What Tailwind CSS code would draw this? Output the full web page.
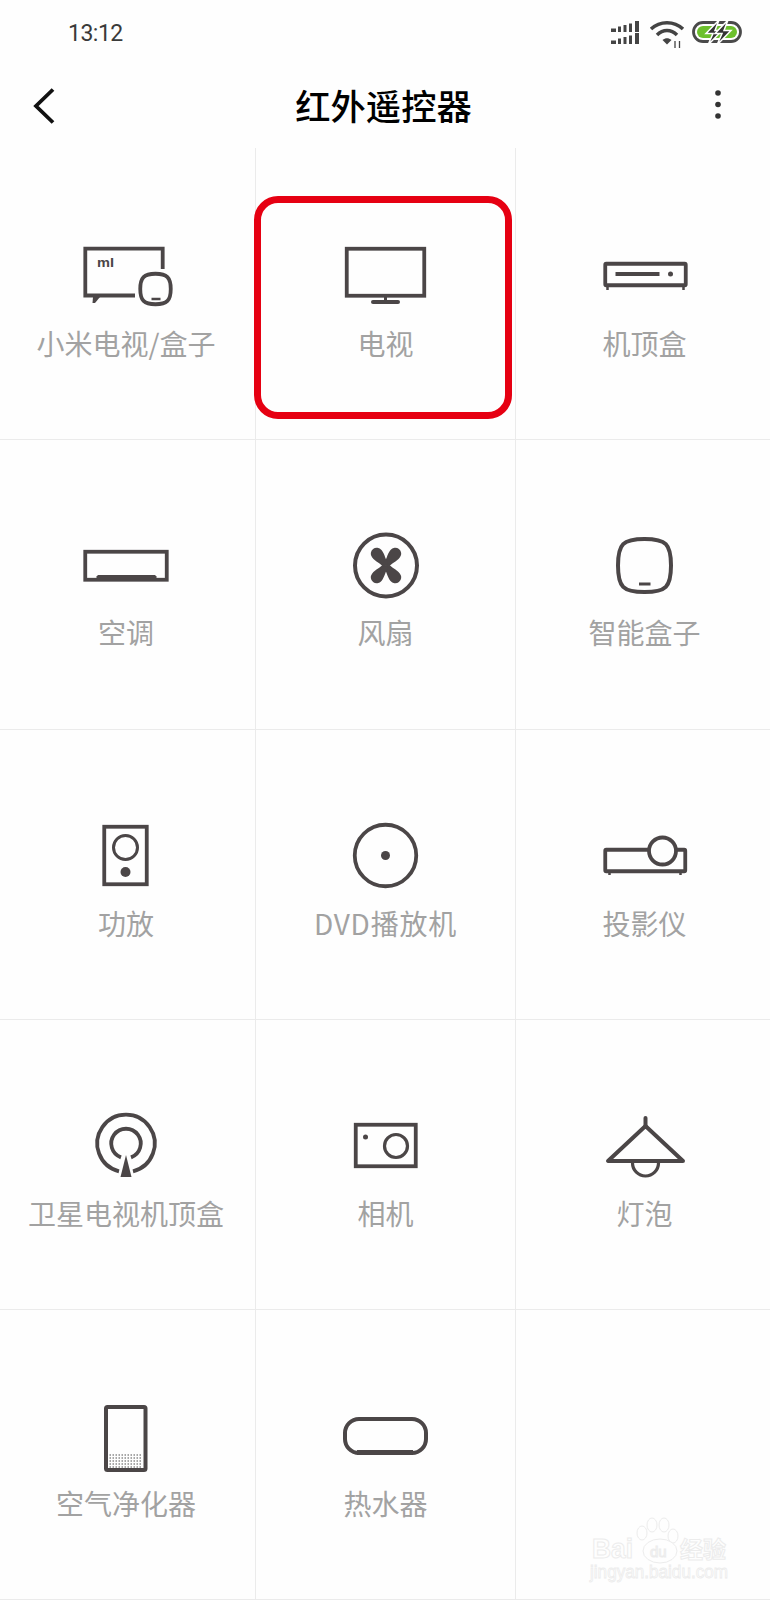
<!DOCTYPE html>
<html lang="zh-CN">
<head>
<meta charset="UTF-8">
<title>红外遥控器</title>
<script src="https://cdn.jsdelivr.net/npm/@tailwindcss/browser@4"></script>
</head>
<body class="bg-white font-['Noto_Sans_CJK_SC',sans-serif]">
<div class="relative w-[770px] h-[1600px] overflow-hidden bg-[#fefefe]">

  <!-- status bar -->
  <div class="h-[64px] flex items-center justify-between pl-[68px] pr-[21px]">
    <span class="text-[23px] text-[#3a3a3a] font-['Roboto',sans-serif] tracking-[-0.5px] mt-[5px]">13:12</span>
    <svg class="w-[132px] h-[30px] mt-[8px] overflow-visible" viewBox="0 0 132 30" fill="none">
      <!-- signal -->
      <g fill="#444">
        <rect x="-6" y="7.500" width="5" height="3.500"/><rect x="1" y="5.500" width="3" height="5.500"/><rect x="6.500" y="4" width="3" height="7"/><rect x="12" y="2.500" width="3" height="8.500"/><rect x="18" y="0" width="4" height="11"/>
        <rect x="-6" y="19.500" width="5" height="3.500"/><rect x="1" y="17.500" width="3" height="5.500"/><rect x="6.500" y="16" width="3" height="7"/><rect x="12" y="14.500" width="3" height="8.500"/><rect x="18" y="12" width="4" height="11"/>
      </g>
      <!-- wifi -->
      <g stroke="#444" stroke-width="3.500">
        <path d="M34 8C43 -0.500 57 -0.500 66 8"/>
        <path d="M40 14C46 8 54 8 60 14"/>
      </g>
      <path d="M45.500 19C48.500 16.500 51.500 16.500 54.500 19L50 23.500Z" fill="#444"/>
      <path d="M58 20V27M62.500 20V27" stroke="#444" stroke-width="1.300"/>
      <!-- battery -->
      <rect x="76.500" y="1.500" width="47" height="19" rx="9.500" stroke="#4a4a4a" stroke-width="2.800"/>
      <rect x="80" y="5" width="40" height="12" rx="6" fill="#6cc02c"/>
      <path d="M102 -1L89 12.500H96L91 24L105 9.500H98Z" fill="#333" stroke="#fff" stroke-width="1.500"/>
      <path d="M111 -1L98 12.500H105L100 24L114 9.500H107Z" fill="#333" stroke="#fff" stroke-width="1.500"/>
    </svg>
  </div>

  <!-- title bar -->
  <div class="h-[84px] flex items-center justify-between pl-[30px] pr-[40px]">
    <svg class="w-[28px] h-[40px]" viewBox="0 0 28 40" fill="none"><path d="M23 3.500L6 20L23 36.500" stroke="#111" stroke-width="3.800"/></svg>
    <h1 class="text-[35.300px] leading-[50px] font-medium text-black -mt-[3px] ml-[3px]">红外遥控器</h1>
    <svg class="w-[24px] h-[40px]" viewBox="0 0 24 40" fill="#333"><circle cx="12" cy="7" r="2.800"/><circle cx="12" cy="18.500" r="2.800"/><circle cx="12" cy="30" r="2.800"/></svg>
  </div>

  <!-- device grid -->
  <div class="grid grid-cols-[256px_260px_254px] text-[28px] leading-[40px] text-[#a2a2a2]">

    <div class="h-[292px] pt-[85px] flex flex-col items-center border-r border-b border-[#ebebeb]">
      <svg class="w-[110px] h-[80px]" viewBox="0 0 110 80" fill="none" stroke="#4b4647" stroke-width="3.800">
        <path d="M89.700 36V15.700H12.300V62.500H62"/>
        <path d="M20 64H27L22 70H19.500Z" fill="#4b4647" stroke="none"/>
        <text x="24" y="34" font-size="13" font-weight="700" fill="#4b4647" stroke="none" textLength="17" lengthAdjust="spacingAndGlyphs" font-family="Liberation Sans">mI</text>
        <path d="M82.500 40.750C94 40.750 97.750 44.500 97.750 56C97.750 67.500 94 71.250 82.500 71.250C71 71.250 67.250 67.500 67.250 56C67.250 44.500 71 40.750 82.500 40.750Z"/>
        <path d="M78.500 66H87.500" stroke-width="2.500"/>
      </svg>
      <span class="mt-[10px] mr-[3px]">小米电视/盒子</span>
    </div>
    <div class="relative h-[292px] pt-[85px] flex flex-col items-center border-r border-b border-[#ebebeb]">
      <svg class="w-[110px] h-[80px]" viewBox="0 0 110 80" fill="none" stroke="#4b4647" stroke-width="3.800">
        <rect x="15.750" y="15.750" width="77.500" height="47"/>
        <path d="M54.500 64V68" stroke-width="3"/>
        <rect x="40" y="67" width="29" height="4" rx="2" fill="#4b4647" stroke="none"/>
      </svg>
      <span class="mt-[10px]">电视</span>
      <div class="absolute left-[-2px] top-[48px] w-[258px] h-[223px] rounded-[24px] border-[7px] border-[#e60012]"></div>
    </div>
    <div class="h-[292px] pt-[85px] flex flex-col items-center border-b border-[#ebebeb]">
      <svg class="w-[110px] h-[80px]" viewBox="0 0 110 80" fill="none" stroke="#4b4647" stroke-width="3.800">
        <rect x="17.250" y="30.750" width="80.500" height="21.500" rx="1"/>
        <path d="M19.500 53V57M95.500 53V57" stroke-width="2.500"/>
        <path d="M27.500 41H71.500"/>
        <circle cx="82.500" cy="41" r="2.500" fill="#4b4647" stroke="none"/>
      </svg>
      <span class="mt-[10px] ml-[3px]">机顶盒</span>
    </div>

    <div class="h-[290px] pt-[83px] flex flex-col items-center border-r border-b border-[#ebebeb]">
      <svg class="w-[110px] h-[80px]" viewBox="0 0 110 80" fill="none" stroke="#4b4647" stroke-width="3.800">
        <rect x="12.250" y="28.750" width="81.500" height="28"/>
        <path d="M23.500 57V53.500L25 52H82L83.500 53.500V57Z" fill="#4b4647" stroke="none"/>
      </svg>
      <span class="mt-[9px] mr-[3px]">空调</span>
    </div>
    <div class="h-[290px] pt-[83px] flex flex-col items-center border-r border-b border-[#ebebeb]">
      <svg class="w-[110px] h-[80px]" viewBox="0 0 110 80" fill="none" stroke="#4b4647" stroke-width="4">
        <circle cx="55" cy="42.500" r="31"/>
        <g fill="#4b4647" stroke="none">
          <path transform="translate(55 42.500) rotate(38)" d="M-3 0C-3 -5 -6 -9 -6 -15A6 6 0 0 1 6 -15C6 -9 3 -5 3 0Z"/>
          <path transform="translate(55 42.500) rotate(142)" d="M-3 0C-3 -5 -6 -9 -6 -15A6 6 0 0 1 6 -15C6 -9 3 -5 3 0Z"/>
          <path transform="translate(55 42.500) rotate(218)" d="M-3 0C-3 -5 -6 -9 -6 -15A6 6 0 0 1 6 -15C6 -9 3 -5 3 0Z"/>
          <path transform="translate(55 42.500) rotate(322)" d="M-3 0C-3 -5 -6 -9 -6 -15A6 6 0 0 1 6 -15C6 -9 3 -5 3 0Z"/>
        </g>
      </svg>
      <span class="mt-[9px]">风扇</span>
    </div>
    <div class="h-[290px] pt-[83px] flex flex-col items-center border-b border-[#ebebeb]">
      <svg class="w-[110px] h-[80px]" viewBox="0 0 110 80" fill="none" stroke="#4b4647" stroke-width="4">
        <path d="M56.500 16C78 16 83 21 83 42.500C83 64 78 69 56.500 69C35 69 30 64 30 42.500C30 21 35 16 56.500 16Z"/>
        <path d="M51 61H62.500" stroke-width="3"/>
      </svg>
      <span class="mt-[9px] ml-[3px]">智能盒子</span>
    </div>

    <div class="h-[290px] pt-[83px] flex flex-col items-center border-r border-b border-[#ebebeb]">
      <svg class="w-[110px] h-[80px]" viewBox="0 0 110 80" fill="none" stroke="#4b4647" stroke-width="3.800">
        <rect x="31.250" y="13.750" width="42.500" height="57.500"/>
        <circle cx="52.500" cy="34.500" r="12" stroke-width="3"/>
        <circle cx="52.500" cy="59" r="5" fill="#4b4647" stroke="none"/>
      </svg>
      <span class="mt-[10px] mr-[3px]">功放</span>
    </div>
    <div class="h-[290px] pt-[83px] flex flex-col items-center border-r border-b border-[#ebebeb]">
      <svg class="w-[110px] h-[80px]" viewBox="0 0 110 80" fill="none" stroke="#4b4647" stroke-width="3.800">
        <circle cx="54.500" cy="42.500" r="30.750"/>
        <circle cx="54.500" cy="42.500" r="4.500" fill="#4b4647" stroke="none"/>
      </svg>
      <span class="mt-[10px] tracking-[0.8px]">DVD播放机</span>
    </div>
    <div class="h-[290px] pt-[83px] flex flex-col items-center border-b border-[#ebebeb]">
      <svg class="w-[110px] h-[80px]" viewBox="0 0 110 80" fill="none" stroke="#4b4647" stroke-width="3.800">
        <rect x="17.250" y="36.750" width="80" height="21.500" rx="1"/>
        <path d="M21.500 59V62M92.500 59V62" stroke-width="2.500"/>
        <circle cx="74.500" cy="38" r="13.500" fill="#fefefe"/>
      </svg>
      <span class="mt-[10px] ml-[3px]">投影仪</span>
    </div>

    <div class="h-[290px] pt-[83px] flex flex-col items-center border-r border-b border-[#ebebeb]">
      <svg class="w-[110px] h-[80px]" viewBox="0 0 110 80" fill="none" stroke="#4b4647" stroke-width="3.800">
        <path d="M46 68.300A28.750 28.750 0 1 1 60 68.300"/>
        <path d="M48 54.400A14.750 14.750 0 1 1 58 54.400"/>
        <path d="M53 52L47.500 74H58.500Z" fill="#4b4647" stroke="none"/>
      </svg>
      <span class="mt-[10px] mr-[3px]">卫星电视机顶盒</span>
    </div>
    <div class="h-[290px] pt-[83px] flex flex-col items-center border-r border-b border-[#ebebeb]">
      <svg class="w-[110px] h-[80px]" viewBox="0 0 110 80" fill="none" stroke="#4b4647" stroke-width="3.800">
        <rect x="24.750" y="21.750" width="60" height="41.500"/>
        <circle cx="65" cy="43" r="11.500" stroke-width="3.200"/>
        <circle cx="34.500" cy="34" r="2.500" fill="#4b4647" stroke="none"/>
      </svg>
      <span class="mt-[10px]">相机</span>
    </div>
    <div class="h-[290px] pt-[83px] flex flex-col items-center border-b border-[#ebebeb]">
      <svg class="w-[110px] h-[80px]" viewBox="0 0 110 80" fill="none" stroke="#4b4647" stroke-width="4" stroke-linecap="round" stroke-linejoin="round">
        <path d="M57.500 23L20 58H95Z"/>
        <path d="M57.500 15V23"/>
        <path d="M44.500 60A13 13 0 0 0 70.500 60" stroke-width="3.200"/>
      </svg>
      <span class="mt-[10px] ml-[3px]">灯泡</span>
    </div>

    <div class="h-[290px] pt-[83px] flex flex-col items-center border-r border-b border-[#ebebeb]">
      <svg class="w-[110px] h-[80px]" viewBox="0 0 110 80" fill="none" stroke="#4b4647" stroke-width="4">
        <rect x="33" y="14" width="39.500" height="63" rx="1.500"/>
        <path d="M36.500 62H69.500M36.500 65H69.500M36.500 68H69.500M36.500 71H69.500M36.500 74H69.500" stroke="#8a8a8a" stroke-width="1.500" stroke-dasharray="1.500 1.500"/>
      </svg>
      <span class="mt-[10px] mr-[3px]">空气净化器</span>
    </div>
    <div class="h-[290px] pt-[83px] flex flex-col items-center border-r border-b border-[#ebebeb]">
      <svg class="w-[110px] h-[80px]" viewBox="0 0 110 80" fill="none" stroke="#4b4647" stroke-width="4">
        <rect x="14" y="26" width="81" height="34" rx="14"/>
        <path d="M26 59.500H82" stroke-width="5"/>
      </svg>
      <span class="mt-[10px]">热水器</span>
    </div>
    <div class="h-[290px] border-b border-[#ebebeb]"></div>
  </div>

  <!-- watermark -->
  <svg class="absolute left-[580px] top-[1510px] w-[160px] h-[80px]" viewBox="0 0 160 80" fill="#fefefe" stroke="#ececec" stroke-width="1">
    <text x="12" y="48" font-size="27" font-family="Liberation Sans" font-weight="700" textLength="41" lengthAdjust="spacingAndGlyphs">Bai</text>
    <ellipse cx="62" cy="23" rx="5" ry="7"/>
    <ellipse cx="72" cy="15" rx="5" ry="7"/>
    <ellipse cx="84" cy="15" rx="5" ry="7"/>
    <ellipse cx="93" cy="26" rx="5" ry="7"/>
    <ellipse cx="80" cy="41" rx="17" ry="12"/>
    <text x="70" y="47" font-size="15" font-family="Liberation Sans">du</text>
    <text x="100" y="48" font-size="23" font-family="Noto Sans CJK SC" font-weight="700">经验</text>
    <text x="10" y="68" font-size="17.500" font-family="Liberation Sans" stroke-width="0.800" textLength="138" lengthAdjust="spacingAndGlyphs">jingyan.baidu.com</text>
  </svg>
</div>
</body>
</html>
